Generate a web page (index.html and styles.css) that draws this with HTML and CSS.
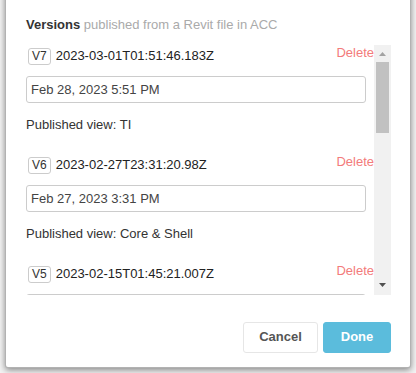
FILE: index.html
```html
<!DOCTYPE html>
<html>
<head>
<meta charset="utf-8">
<link rel="stylesheet" href="styles.css">
</head>
<body>
<div class="dialog">
  <div class="title"><b>Versions</b> <span class="sub">published from a Revit file in ACC</span></div>
  <div class="scroller">
    <div class="list">
      <div class="item">
        <div class="row"><span class="badge">V7</span><span class="stamp">2023-03-01T01:51:46.183Z</span><a class="del">Delete</a></div>
        <div class="field">Feb 28, 2023 5:51 PM</div>
        <div class="view">Published view: TI</div>
      </div>
      <div class="item">
        <div class="row"><span class="badge">V6</span><span class="stamp">2023-02-27T23:31:20.98Z</span><a class="del">Delete</a></div>
        <div class="field">Feb 27, 2023 3:31 PM</div>
        <div class="view">Published view: Core &amp; Shell</div>
      </div>
      <div class="item">
        <div class="row"><span class="badge">V5</span><span class="stamp">2023-02-15T01:45:21.007Z</span><a class="del">Delete</a></div>
        <div class="field"></div>
      </div>
    </div>
    <div class="bar">
      <div class="btn-arrow"><svg width="7" height="4" viewBox="0 0 7 4"><polygon points="0,4 7,4 3.5,0" fill="#a3a3a3"/></svg></div>
      <div class="thumb"></div>
      <div class="spacer"></div>
      <div class="btn-arrow down"><svg width="7" height="4" viewBox="0 0 7 4"><polygon points="0,0 7,0 3.5,4" fill="#505050"/></svg></div>
    </div>
  </div>
  <div class="footer">
    <button class="btn cancel">Cancel</button>
    <button class="btn done">Done</button>
  </div>
</div>
</body>
</html>
```

FILE: styles.css
```css
html, body {
  margin: 0;
  padding: 0;
  height: 100%;
  overflow: hidden;
}
body {
  background: #f3f3f3;
  font-family: "Liberation Sans", Arial, sans-serif;
  font-size: 13px;
  color: #333;
}
.dialog {
  box-sizing: border-box;
  width: 406px;
  margin: -10px 0 0 5px;
  background: #fff;
  border: 1px solid rgba(0,0,0,0.3);
  border-radius: 3px;
  box-shadow: 0 2px 6px rgba(0,0,0,0.45);
  padding: 25px 19px 14px 20px;
}
.title {
  line-height: 18px;
  height: 18px;
}
.title b {
  font-weight: bold;
  color: #333;
}
.sub {
  color: #aaa;
}
.scroller {
  margin-top: 11px;
  height: 250px;
  display: flex;
}
.list {
  flex: 1;
  overflow: hidden;
  padding-top: 1px;
}
.item {
  padding-bottom: 21px;
}
.row {
  display: flex;
  align-items: center;
  height: 20px;
}
.badge {
  box-sizing: border-box;
  height: 17px;
  line-height: 15px;
  font-size: 12px;
  padding: 0 3px;
  border: 1px solid #ccc;
  border-radius: 3px;
  margin-left: 2px;
  color: #333;
}
.stamp {
  margin-left: 5px;
  line-height: 20px;
  color: #222;
}
.del {
  margin-left: auto;
  align-self: flex-start;
  line-height: 14px;
  color: #f37b7b;
  cursor: pointer;
}
.field {
  box-sizing: border-box;
  width: 340px;
  height: 27px;
  margin-top: 10px;
  border: 1px solid #ccc;
  border-radius: 3px;
  padding: 0 4px;
  line-height: 25px;
  color: #444;
}
.view {
  margin-top: 13px;
  line-height: 18px;
  color: #333;
}
.bar {
  width: 17px;
  background: #f1f1f1;
  display: flex;
  flex-direction: column;
}
.btn-arrow {
  height: 17px;
  display: flex;
  align-items: center;
  justify-content: center;
}
.btn-arrow svg {
  display: block;
}
.btn-arrow.down {
  align-items: flex-start;
  padding-top: 5px;
  box-sizing: border-box;
}
.thumb {
  height: 71px;
  margin: 0 2px;
  background: #c1c1c1;
}
.spacer {
  flex: 1;
}
.footer {
  margin-top: 27px;
  display: flex;
  justify-content: flex-end;
  gap: 5px;
}
.btn {
  box-sizing: border-box;
  height: 31px;
  border-radius: 3px;
  font-family: "Liberation Sans", Arial, sans-serif;
  font-size: 13px;
  font-weight: bold;
  padding: 0 0 2px 0;
  cursor: pointer;
}
.cancel {
  width: 75px;
  background: #fff;
  border: 1px solid #e6e6e6;
  color: #555;
}
.done {
  width: 68px;
  background: #5bbcdc;
  border: 1px solid #5bbcdc;
  color: #fff;
}
```
